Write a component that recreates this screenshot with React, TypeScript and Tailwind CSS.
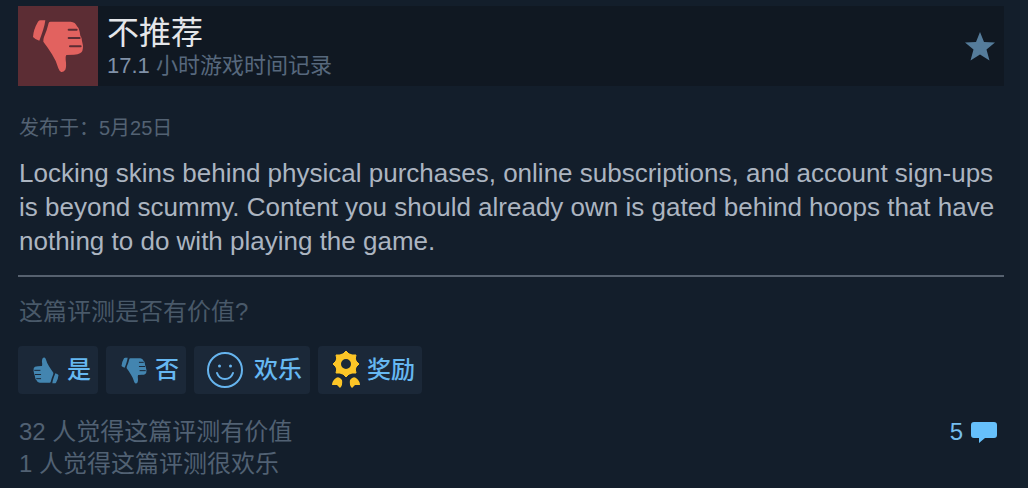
import React from 'react'

interface IconProps {
    className?: string
    line: string
}

const ThumbDown: React.FC<IconProps> = ({ className, line }) => (
    <svg viewBox="0 0 152 162" className={className} aria-hidden="true">
        <path d="M16 8Q19 4 24 4L38 4Q36 20 31 34Q26 50 20 65Q8 62 1 54Q2 32 16 8Z" fill="currentColor" />
        <path
            d="M48 12Q49 8 54 8L114 8Q128 9 133 22Q140 27 141 38L143 50Q148 56 148 66L151 80Q152 98 142 103Q136 107 124 107L101 108Q98 112 99 122Q102 142 98 152Q92 160 86 159Q80 157 77 148Q70 124 58 106Q46 86 32 68Q31 62 34 54Q43 34 48 12Z"
            fill="currentColor"
        />
        <path d="M108 32H132M108 57H141M112 82H144" stroke={line} strokeWidth="6" strokeLinecap="round" />
    </svg>
)

const Smile = () => (
    <svg viewBox="0 0 38 38" className="h-[38px] w-[38px]" fill="none" stroke="#66b4ee" aria-hidden="true">
        <circle cx="19" cy="19" r="17" strokeWidth="2" />
        <path d="M11 22Q13 28 19 28Q25 28 27 22" strokeWidth="2" strokeLinecap="round" />
        <circle cx="13.5" cy="15" r="1.5" fill="#66b4ee" stroke="none" />
        <circle cx="24.5" cy="15" r="1.5" fill="#66b4ee" stroke="none" />
    </svg>
)

const Award = () => (
    <svg viewBox="0 0 30 38" className="h-[38px] w-[30px]" fill="#fcc527" aria-hidden="true">
        <circle cx="15" cy="13" r="8" fill="none" stroke="#fcc527" strokeWidth="6" />
        <path d="M15 0L18 3H12ZM15 26L18 23H12ZM2 13L5 10V16ZM28 13L25 10V16ZM5 4L10 4L6 9ZM25 4L20 4L24 9ZM5 22L10 22L6 17ZM25 22L20 22L24 17Z" stroke="#fcc527" strokeWidth="1" strokeLinejoin="round" />
        <path d="M5 27Q8 25 11 29Q12 34 9 37L6 34L1 34Q1 30 5 27Z" />
        <path d="M25 27Q22 25 19 29Q18 34 21 37L24 34L29 34Q29 30 25 27Z" />
    </svg>
)

const btn = 'flex h-12 items-center rounded-sm bg-[#1b2838] text-2xl font-medium text-[#66b8f2]'

const App: React.FC = () => {
    return (
        <div className="min-h-screen border-r-8 border-[#16232f] bg-[#131e2b] pt-1.5 pr-4 pb-1 pl-[18px] font-['Liberation_Sans','Noto_Sans_CJK_SC',sans-serif]">
            <header className="flex h-20 items-center bg-[#101822]">
                <div className="flex h-20 w-20 items-center justify-center bg-[#5c2d34] text-[#e2625f]">
                    <ThumbDown className="h-[54px] w-[52px]" line="#5c2d34" />
                </div>
                <div className="flex-1 pt-1 pl-[9px]">
                    <h1 className="text-[32px] leading-9 text-[#e4e6ea]">不推荐</h1>
                    <p className="text-[22px] leading-[30px] text-[#57687d]">
                        <span className="text-[#8091a8]">17.1</span> 小时游戏时间记录
                    </p>
                </div>
                <svg viewBox="0 0 30 29" className="mr-[9px] h-[29px] w-[30px]" fill="#557c9b" aria-hidden="true">
                    <path d="M15 0L19 10L30 10.500L21.500 17.500L24.500 28.500L15 22.500L5.500 28.500L8.500 17.500L0 10.500L11 10Z" />
                </svg>
            </header>

            <p className="mt-7 pl-px text-xl leading-7 text-[#536273]">发布于：5月25日</p>
            <p className="mt-3.5 pl-px text-[26px] leading-[34px] text-[#acb5c1]">
                Locking skins behind physical purchases, online subscriptions, and account sign-ups is beyond scummy.
                Content you should already own is gated behind hoops that have nothing to do with playing the game.
            </p>
            <hr className="mt-[17px] border-t-2 border-[#56616f]" />

            <p className="mt-[17px] pl-px text-2xl leading-9 text-[#495969]">这篇评测是否有价值?</p>
            <div className="mt-4 flex gap-2">
                <button className={`${btn} w-20 gap-2 pl-[15px]`}>
                    <ThumbDown className="h-[27px] w-[26px] rotate-180 text-[#4385b0]" line="#1b2838" />
                    是
                </button>
                <button className={`${btn} w-20 gap-2 pl-[15px]`}>
                    <ThumbDown className="h-[27px] w-[26px] text-[#4385b0]" line="#1b2838" />
                    否
                </button>
                <button className={`${btn} w-[116px] gap-2.5 pl-3`}>
                    <Smile />
                    欢乐
                </button>
                <button className={`${btn} w-[104px] gap-1.5 pl-[13px]`}>
                    <Award />
                    奖励
                </button>
            </div>

            <footer className="mt-[22px] flex items-start justify-between">
                <div className="pl-px text-2xl leading-8 text-[#516173]">
                    <p>32 人觉得这篇评测有价值</p>
                    <p>1 人觉得这篇评测很欢乐</p>
                </div>
                <a href="#comments" className="mr-[7px] flex items-center gap-2 text-2xl leading-8 text-[#75bdef]">
                    5
                    <svg viewBox="0 0 26 22" className="h-[22px] w-[26px]" fill="#66c0fb" aria-hidden="true">
                        <path d="M3 1H23Q26 1 26 4V14Q26 17 23 17H14L8 22V17H3Q0 17 0 14V4Q0 1 3 1Z" />
                    </svg>
                </a>
            </footer>
        </div>
    )
}

export default App
